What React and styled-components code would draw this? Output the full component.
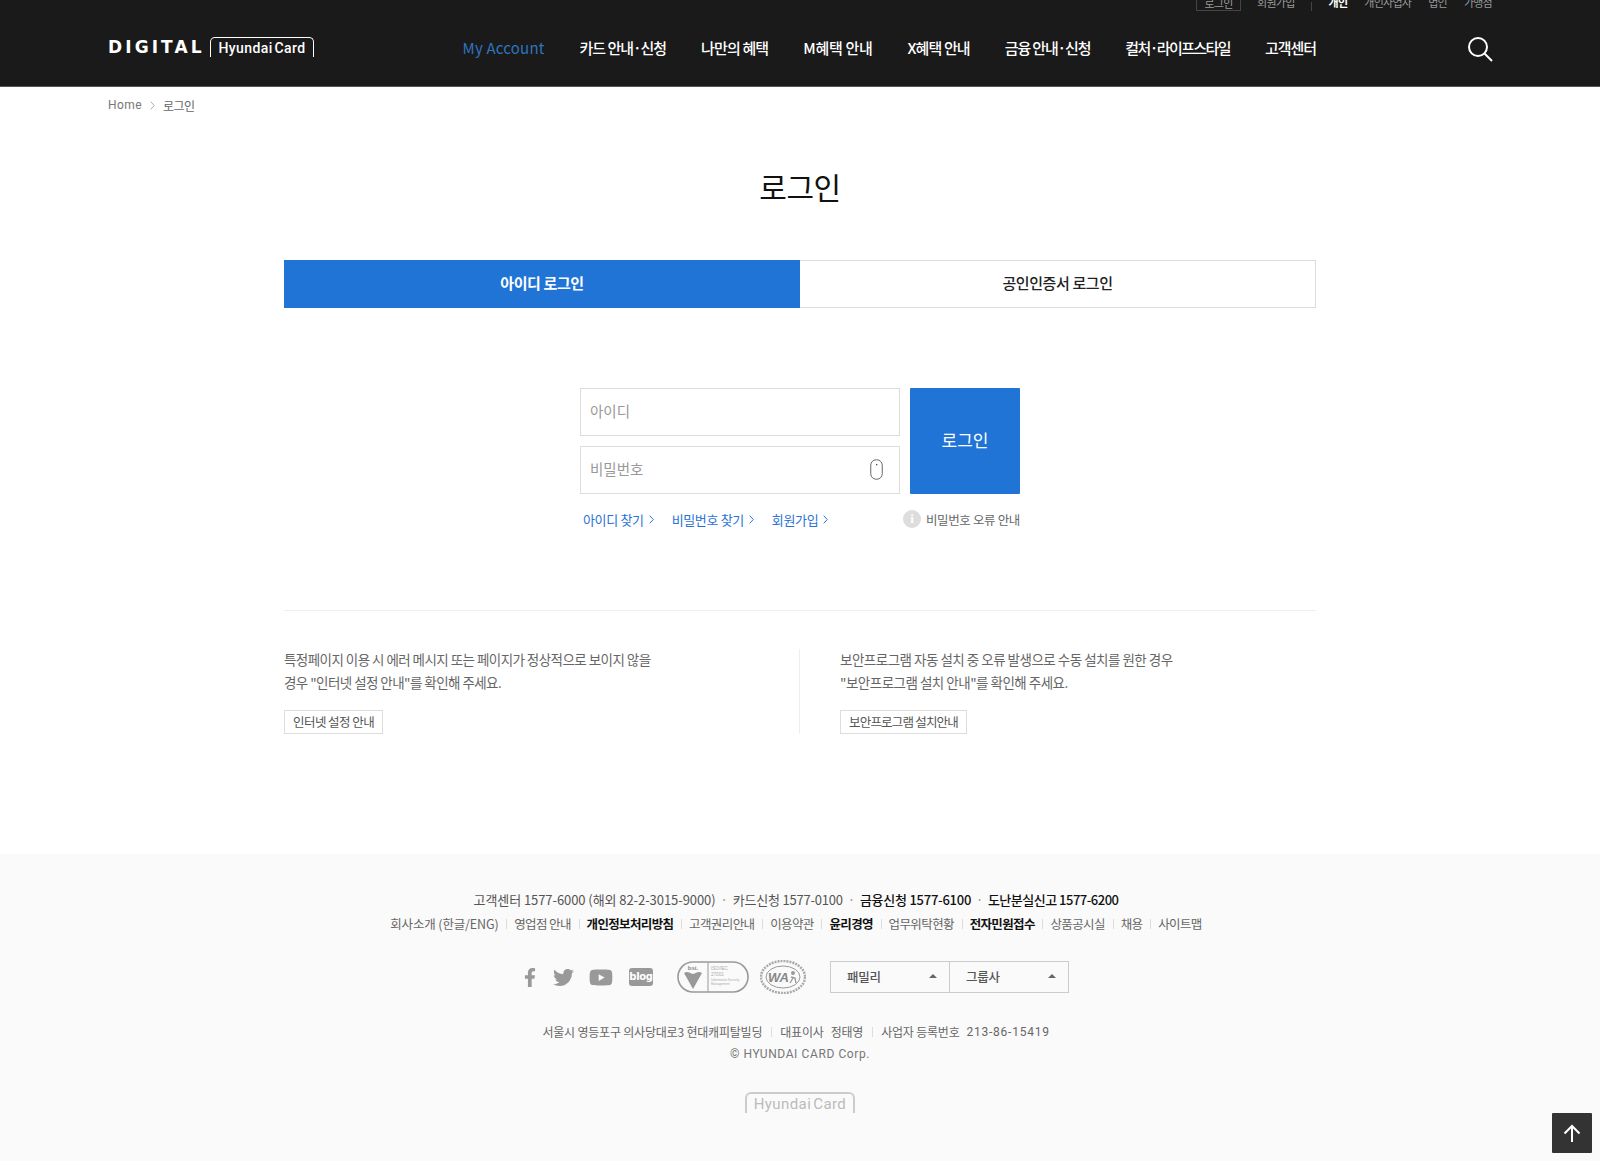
import React from "react";
import styled, { createGlobalStyle } from "styled-components";
import { FaFacebookF, FaTwitter, FaYoutube } from "react-icons/fa";

const Global = createGlobalStyle`
  html, body { margin: 0; padding: 0; background: #fff; }
  body { font-family: "Noto Sans CJK KR", "Noto Sans", sans-serif; color: #333; }
  * { box-sizing: border-box; }
`;

const Header = styled.header`
  height: 87px;
  background: #1a1a1a;
  border-bottom: 1px solid #555;
  padding: 0 107px 0 108px;
`;
const UtilBar = styled.div`
  height: 11px;
  padding-right: 1px;
  display: flex;
  justify-content: flex-end;
  align-items: flex-end;
  overflow: hidden;
  font-size: 11px;
  letter-spacing: -0.75px;
  color: #999;
`;
const UtilLogin = styled.span`
  height: 24px;
  width: 45px;
  margin-right: 16px;
  border: 1px solid #444;
  text-align: center;
  line-height: 30px;
`;
const UtilItem = styled.span`
  height: 24px;
  line-height: 30px;
  margin-left: ${(p) => p.$gap || 0}px;
  font-weight: ${(p) => (p.$strong ? 700 : 400)};
  color: ${(p) => (p.$strong ? "#fff" : "#999")};
`;
const UtilSep = styled.span`
  width: 1px;
  height: 9px;
  background: #444;
  margin: 0 17px 0 16px;
`;
const HeaderRow = styled.div`
  height: 75px;
  display: flex;
  align-items: center;
`;
const LogoWrap = styled.div`
  display: flex;
  align-items: center;
  margin-top: -4px;
`;
const Digital = styled.span`
  font-family: "DejaVu Sans", sans-serif;
  font-weight: 700;
  font-size: 17px;
  letter-spacing: 3.1px;
  color: #fff;
  width: 102px;
  white-space: nowrap;
`;
const CardBox = styled.span`
  display: block;
  width: 104px;
  height: 20px;
  border: 1.5px solid #fff;
  border-bottom: 0;
  border-radius: 5px 5px 0 0;
  font-family: "Roboto", sans-serif;
  font-weight: 500;
  font-size: 14px;
  line-height: 20px;
  color: #fff;
  text-align: center;
  letter-spacing: 0.4px;
  word-spacing: -2px;
`;
const Nav = styled.nav`
  margin-left: auto;
  padding-bottom: 2px;
  display: flex;
  gap: 35px;
  font-size: 15px;
  font-weight: 500;
  color: #fff;
  white-space: nowrap;
`;
const NavItem = styled.a`
  color: ${(p) => (p.$active ? "#2f74bf" : "#fff")};
  font-weight: ${(p) => (p.$active ? 400 : 500)};
  letter-spacing: ${(p) => p.$ls}px;
`;
const SearchBtn = styled.span`
  margin-left: 151px;
  display: flex;
  width: 26px;
  height: 26px;
`;

const Crumbs = styled.div`
  height: 36px;
  padding-left: 108px;
  display: flex;
  align-items: center;
  font-size: 12px;
  color: #777;
  gap: 8px;
`;
const Home = styled.span`
  font-family: "Roboto", sans-serif;
  letter-spacing: 0.4px;
`;
const CrumbCurrent = styled.span`
  letter-spacing: -0.5px;
  color: #666;
`;

const Main = styled.main`
  width: 1032px;
  margin: 0 auto;
  padding-bottom: 120px;
`;
const Title = styled.h1`
  margin: 44px 0 0;
  height: 40px;
  line-height: 38px;
  text-align: center;
  font-size: 30px;
  font-weight: 400;
  color: #111;
  letter-spacing: -0.5px;
`;
const Tabs = styled.div`
  margin-top: 53px;
  height: 48px;
  display: grid;
  grid-template-columns: 1fr 1fr;
`;
const Tab = styled.div`
  display: flex;
  align-items: center;
  justify-content: center;
  padding-bottom: 4px;
  font-size: 15px;
  letter-spacing: -0.4px;
  font-weight: ${(p) => (p.$active ? 700 : 500)};
  background: ${(p) => (p.$active ? "#1f74d6" : "#fff")};
  color: ${(p) => (p.$active ? "#fff" : "#222")};
  border: ${(p) => (p.$active ? "0" : "1px solid #ddd")};
  border-left: 0;
`;
const FormWrap = styled.div`
  width: 440px;
  margin: 80px auto 0;
`;
const FormGrid = styled.div`
  display: grid;
  grid-template-columns: 320px 110px;
  gap: 10px;
`;
const Fields = styled.div`
  display: flex;
  flex-direction: column;
  gap: 10px;
`;
const FieldBox = styled.div`
  position: relative;
  height: 48px;
`;
const Input = styled.input`
  width: 100%;
  height: 48px;
  border: 1px solid #ddd;
  padding: 0 9px 4px;
  font: 400 14.5px "Noto Sans CJK KR", sans-serif;
  outline: none;
  background: #fff;
  &::placeholder { color: #999; opacity: 1; }
`;
const Capsule = styled.svg`
  position: absolute;
  right: 17px;
  top: 13px;
`;
const LoginButton = styled.button`
  border: 0;
  border-radius: 1px;
  padding: 0 0 3px;
  background: #1f74d6;
  color: #fff;
  font: 400 17px "Noto Sans CJK KR", sans-serif;
  height: 106px;
`;
const UnderRow = styled.div`
  display: flex;
  align-items: center;
  margin-top: 16px;
  height: 20px;
  padding-bottom: 2px;
  font-size: 12.5px;
  letter-spacing: -0.35px;
`;
const HelpLink = styled.a`
  display: inline-flex;
  align-items: center;
  gap: 5px;
  color: #2a73d6;
  font-size: 13px;
  margin-left: ${(p) => p.$gap}px;
  white-space: nowrap;
`;
const Notice = styled.span`
  margin-left: auto;
  display: inline-flex;
  align-items: center;
  gap: 5px;
  color: #666;
  white-space: nowrap;
`;
const InfoDot = styled.span`
  width: 18px;
  height: 18px;
  border-radius: 50%;
  background: #ddd;
  color: #fff;
  font: 700 13px/18px "Liberation Serif", serif;
  text-align: center;
`;
const Divider = styled.hr`
  margin: 80px 0 0;
  border: 0;
  border-top: 1px solid #eee;
`;
const Guides = styled.div`
  margin-top: 38px;
  display: grid;
  grid-template-columns: 1fr 1fr;
`;
const Guide = styled.div`
  padding-left: ${(p) => (p.$right ? "40px" : "0")};
  border-left: ${(p) => (p.$right ? "1px solid #eee" : "0")};
  margin-left: ${(p) => (p.$right ? "-1px" : "0")};
`;
const GuideText = styled.p`
  margin: -1px 0 0;
  font-size: 13.5px;
  line-height: 23px;
  letter-spacing: ${(p) => (p.$right ? "-0.5px" : "-0.55px")};
  color: #666;
  white-space: nowrap;
`;
const GuideBtn = styled.a`
  display: inline-block;
  margin-top: 16px;
  height: 24px;
  line-height: 22px;
  padding: 0 8px;
  border: 1px solid #ddd;
  font-size: 12.5px;
  letter-spacing: ${(p) => (p.$tight ? "-0.8px" : "-0.55px")};
  color: #555;
  white-space: nowrap;
`;

const Footer = styled.footer`
  background: #fafafa;
  padding: 34px 0 48px;
  display: flex;
  flex-direction: column;
  align-items: center;
`;
const ContactRow = styled.div`
  height: 24px;
  line-height: 23px;
  font-size: 13px;
  display: flex;
  color: #555;
  white-space: nowrap;
  transform: translateX(-4px);
`;
const Contact = styled.span`
  color: ${(p) => (p.$strong ? "#111" : "#555")};
  font-weight: ${(p) => (p.$strong ? 500 : 400)};
  letter-spacing: ${(p) => p.$ls}px;
  &:not(:first-child)::before {
    content: "·";
    margin: 0 5px;
    color: #888;
    font-weight: 400;
  }
`;
const LinksRow = styled.div`
  height: 23px;
  line-height: 23px;
  font-size: 12.5px;
  letter-spacing: -0.6px;
  display: flex;
  white-space: nowrap;
  transform: translateX(-4px);
`;
const FootLink = styled.a`
  color: ${(p) => (p.$strong ? "#111" : "#666")};
  font-weight: ${(p) => (p.$strong ? 700 : 400)};
  letter-spacing: ${(p) => (p.$strong ? "-0.65px" : "inherit")};
  display: flex;
  align-items: center;
  &:first-child { letter-spacing: -0.15px; }
  &:not(:first-child)::before {
    content: "";
    width: 1px;
    height: 10px;
    background: #ddd;
    margin: 0 7px 0 7.7px;
  }
`;
const BadgeRow = styled.div`
  margin-top: 26px;
  height: 32px;
  display: flex;
  align-items: center;
  color: #999;
  transform: translateX(-4px);
`;
const Social = styled.span`
  display: flex;
  align-items: center;
  justify-content: center;
  width: ${(p) => p.$w}px;
  margin-right: ${(p) => p.$mr}px;
  color: #999;
`;
const BlogTag = styled.span`
  width: 24px;
  height: 18px;
  border-radius: 3px;
  background: #999;
  color: #fff;
  font: 700 10px/18px "DejaVu Sans", sans-serif;
  text-align: center;
  letter-spacing: -0.3px;
`;
const Selects = styled.div`
  margin-left: 24px;
  display: flex;
  width: 239px;
  height: 32px;
  border: 1px solid #ccc;
`;
const SelectBox = styled.div`
  flex: 1;
  display: flex;
  align-items: center;
  justify-content: space-between;
  padding: 0 12px 2px 16px;
  font-size: 12.5px;
  font-weight: 500;
  letter-spacing: -0.3px;
  color: #555;
  & + & { border-left: 1px solid #ccc; }
  &::after {
    content: "";
    border-left: 4px solid transparent;
    border-right: 4px solid transparent;
    border-bottom: 4px solid #666;
  }
`;
const Address = styled.div`
  margin-top: 28px;
  height: 22px;
  line-height: 22px;
  display: flex;
  align-items: center;
  font-size: 12px;
  letter-spacing: -0.2px;
  color: #666;
  white-space: nowrap;
  transform: translateX(-4px);
`;
const AddrPart = styled.span`
  display: flex;
  align-items: center;
  &:not(:first-child)::before {
    content: "";
    width: 1px;
    height: 10px;
    background: #ddd;
    margin: 0 8px 0 9px;
  }
`;
const Spaced = styled.span`
  margin-left: ${(p) => p.$m}px;
  letter-spacing: ${(p) => p.$ls || "inherit"};
  font-family: ${(p) => (p.$latin ? '"Roboto", sans-serif' : "inherit")};
`;
const Copy = styled.div`
  height: 22px;
  line-height: 22px;
  font-family: "Roboto", sans-serif;
  font-size: 12px;
  letter-spacing: 0.6px;
  color: #777;
`;
const FootLogo = styled.div`
  margin-top: 27px;
  width: 110px;
  height: 21px;
  border: 2px solid #ccc;
  border-bottom: 0;
  border-radius: 6px 6px 0 0;
  font: 400 15px/20px "Roboto", sans-serif;
  color: #bbb;
  text-align: center;
  letter-spacing: 0.4px;
  word-spacing: -2px;
`;
const TopBtn = styled.a`
  position: fixed;
  right: 8px;
  bottom: 8px;
  width: 40px;
  height: 40px;
  background: #333;
  border-radius: 1px;
  display: flex;
  align-items: center;
  justify-content: center;
`;

const Chevron = ({ c = "#2a73d6", h = 9 }) => (
  <svg width="5" height={h} viewBox="0 0 5 9" fill="none">
    <path d="M.7.7 4.3 4.5.7 8.3" stroke={c} strokeWidth="1" />
  </svg>
);

const navItems = [
  ["카드 안내·신청", -1.05],
  ["나만의 혜택", -0.85],
  ["M혜택 안내", -0.3],
  ["X혜택 안내", -0.88],
  ["금융 안내·신청", -1.15],
  ["컬처·라이프스타일", -1.6],
  ["고객센터", -1.05],
];
const footLinks = [
  ["회사소개 (한글/ENG)"], ["영업점 안내"], ["개인정보처리방침", 1], ["고객권리안내"], ["이용약관"], ["윤리경영", 1],
  ["업무위탁현황"], ["전자민원접수", 1], ["상품공시실"], ["채용"], ["사이트맵"],
];

export default function App() {
  return (
    <>
      <Global />
      <Header>
        <UtilBar>
          <UtilLogin>로그인</UtilLogin>
          <UtilItem>회원가입</UtilItem>
          <UtilSep />
          <UtilItem $strong>개인</UtilItem>
          <UtilItem $gap={17}>개인사업자</UtilItem>
          <UtilItem $gap={17}>법인</UtilItem>
          <UtilItem $gap={17}>가맹점</UtilItem>
        </UtilBar>
        <HeaderRow>
          <LogoWrap>
            <Digital>DIGITAL</Digital>
            <CardBox>Hyundai Card</CardBox>
          </LogoWrap>
          <Nav>
            <NavItem $active $ls={0.2}>My Account</NavItem>
            {navItems.map(([n, ls]) => <NavItem key={n} $ls={ls}>{n}</NavItem>)}
          </Nav>
          <SearchBtn>
            <svg width="26" height="26" viewBox="0 0 26 26" fill="none" stroke="#fff" strokeWidth="2">
              <circle cx="11" cy="11" r="9" />
              <path d="M17.5 17.5 25 25" />
            </svg>
          </SearchBtn>
        </HeaderRow>
      </Header>

      <Crumbs>
        <Home>Home</Home>
        <Chevron c="#aaa" />
        <CrumbCurrent>로그인</CrumbCurrent>
      </Crumbs>

      <Main>
        <Title>로그인</Title>
        <Tabs>
          <Tab $active>아이디 로그인</Tab>
          <Tab>공인인증서 로그인</Tab>
        </Tabs>
        <FormWrap>
          <FormGrid>
            <Fields>
              <FieldBox><Input placeholder="아이디" /></FieldBox>
              <FieldBox>
                <Input placeholder="비밀번호" />
                <Capsule width="13" height="21" viewBox="0 0 13 21" fill="none">
                  <rect x=".75" y=".75" width="11.5" height="19.5" rx="5.5" stroke="#666" strokeWidth="1" />
                  <rect x="6" y="5" width="1.3" height="1.3" fill="#444" />
                </Capsule>
              </FieldBox>
            </Fields>
            <LoginButton>로그인</LoginButton>
          </FormGrid>
          <UnderRow>
            <HelpLink $gap={3}>아이디 찾기 <Chevron /></HelpLink>
            <HelpLink $gap={18}>비밀번호 찾기 <Chevron /></HelpLink>
            <HelpLink $gap={18}>회원가입 <Chevron /></HelpLink>
            <Notice><InfoDot>i</InfoDot>비밀번호 오류 안내</Notice>
          </UnderRow>
        </FormWrap>
        <Divider />
        <Guides>
          <Guide>
            <GuideText>특정페이지 이용 시 에러 메시지 또는 페이지가 정상적으로 보이지 않을<br />경우 "인터넷 설정 안내"를 확인해 주세요.</GuideText>
            <GuideBtn>인터넷 설정 안내</GuideBtn>
          </Guide>
          <Guide $right>
            <GuideText $right>보안프로그램 자동 설치 중 오류 발생으로 수동 설치를 원한 경우<br />"보안프로그램 설치 안내"를 확인해 주세요.</GuideText>
            <GuideBtn $tight>보안프로그램 설치안내</GuideBtn>
          </Guide>
        </Guides>
      </Main>

      <Footer>
        <ContactRow>
          <Contact $ls={-0.07}>고객센터 1577-6000 (해외 82-2-3015-9000)</Contact>
          <Contact $ls={-0.2}>카드신청 1577-0100</Contact>
          <Contact $ls={-0.25} $strong>금융신청 1577-6100</Contact>
          <Contact $ls={-0.5} $strong>도난분실신고 1577-6200</Contact>
        </ContactRow>
        <LinksRow>
          {footLinks.map(([t, s]) => <FootLink key={t} $strong={s}>{t}</FootLink>)}
        </LinksRow>
        <BadgeRow>
          <Social $w={14} $mr={15}><FaFacebookF size={19} /></Social>
          <Social $w={22} $mr={15}><FaTwitter size={21} /></Social>
          <Social $w={24} $mr={16}><FaYoutube size={27} /></Social>
          <Social $w={24} $mr={24}><BlogTag>blog</BlogTag></Social>
          <svg width="72" height="32" viewBox="0 0 72 32" fill="none">
            <rect x="1" y="1" width="70" height="30" rx="15" stroke="#999" strokeWidth="1.6" />
            <path d="M31 1.5V30.5" stroke="#999" />
            <text x="16" y="9" fontSize="6" fontWeight="700" fill="#888" textAnchor="middle" fontFamily="Liberation Sans">bsi.</text>
            <path d="M7 12c3-2 4-1 9 1 5-2 6-3 9-1l-9 16z" fill="#999" />
            <text x="34" y="9" fontSize="4.6" fill="#aaa" fontFamily="Liberation Sans">ISO/IEC</text>
            <text x="34" y="14.5" fontSize="4.6" fill="#aaa" fontFamily="Liberation Sans">27001</text>
            <text x="34" y="20" fontSize="3.2" fill="#aaa" fontFamily="Liberation Sans">Information Security</text>
            <text x="34" y="24" fontSize="3.2" fill="#aaa" fontFamily="Liberation Sans">Management</text>
          </svg>
          <svg style={{ marginLeft: 11 }} width="46" height="34" viewBox="0 0 46 34" fill="none">
            <ellipse cx="23" cy="17" rx="22" ry="16" stroke="#aaa" strokeWidth="2.5" strokeDasharray="2 1" />
            <ellipse cx="23" cy="17" rx="17" ry="11" fill="#fafafa" stroke="#999" strokeWidth="1" />
            <text x="8" y="22" fontSize="13" fontWeight="700" fontStyle="italic" fill="#888" fontFamily="Liberation Sans">WA</text>
            <circle cx="33" cy="13" r="2" fill="#999" />
            <path d="M31 17l4 1 1 5M33 18l-3 5" stroke="#999" strokeWidth="1.3" />
          </svg>
          <Selects>
            <SelectBox>패밀리</SelectBox>
            <SelectBox>그룹사</SelectBox>
          </Selects>
        </BadgeRow>
        <Address>
          <AddrPart>서울시 영등포구 의사당대로3 현대캐피탈빌딩</AddrPart>
          <AddrPart>대표이사<Spaced $m={7}>정태영</Spaced></AddrPart>
          <AddrPart>사업자 등록번호<Spaced $m={7} $latin $ls="0.75px">213-86-15419</Spaced></AddrPart>
        </Address>
        <Copy>© HYUNDAI CARD Corp.</Copy>
        <FootLogo>Hyundai Card</FootLogo>
      </Footer>

      <TopBtn>
        <svg width="18" height="18" viewBox="0 0 18 18" fill="none" stroke="#fff" strokeWidth="2">
          <path d="M9 18V2M1.5 9.5 9 2l7.5 7.5" />
        </svg>
      </TopBtn>
    </>
  );
}
